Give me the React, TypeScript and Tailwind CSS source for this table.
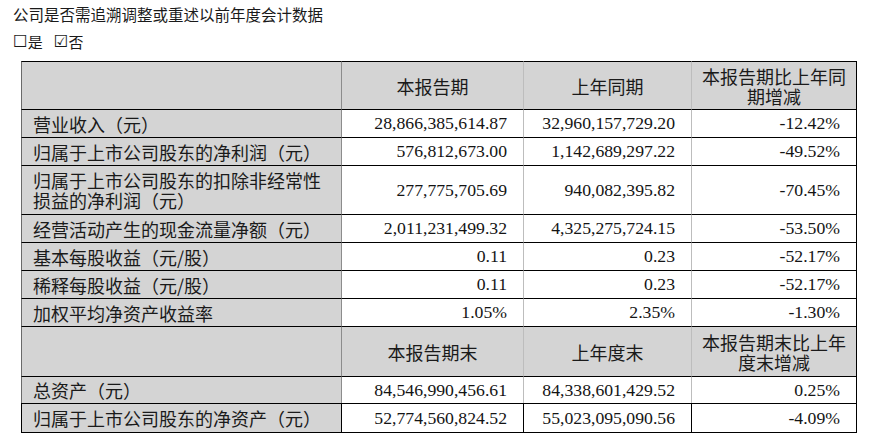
import React from "react";

type Row = {
  label: React.ReactNode;
  a: string;
  b: string;
  c: string;
  h: string;
  last?: boolean;
};

const rows1: Row[] = [
  { label: "营业收入（元）", a: "28,866,385,614.87", b: "32,960,157,729.20", c: "-12.42%", h: "h-[28px]" },
  { label: "归属于上市公司股东的净利润（元）", a: "576,812,673.00", b: "1,142,689,297.22", c: "-49.52%", h: "h-[28px]" },
  {
    label: (
      <>
        归属于上市公司股东的扣除非经常性
        <br />
        损益的净利润（元）
      </>
    ),
    a: "277,775,705.69",
    b: "940,082,395.82",
    c: "-70.45%",
    h: "h-[49px]",
  },
  { label: "经营活动产生的现金流量净额（元）", a: "2,011,231,499.32", b: "4,325,275,724.15", c: "-53.50%", h: "h-[28px]" },
  { label: "基本每股收益（元/股）", a: "0.11", b: "0.23", c: "-52.17%", h: "h-[28px]" },
  { label: "稀释每股收益（元/股）", a: "0.11", b: "0.23", c: "-52.17%", h: "h-[28px]" },
  { label: "加权平均净资产收益率", a: "1.05%", b: "2.35%", c: "-1.30%", h: "h-[28px]" },
];

const rows2: Row[] = [
  { label: "总资产（元）", a: "84,546,990,456.61", b: "84,338,601,429.52", c: "0.25%", h: "h-[27px]" },
  { label: "归属于上市公司股东的净资产（元）", a: "52,774,560,824.52", b: "55,023,095,090.56", c: "-4.09%", h: "h-[29px]", last: true },
];

function DataRow({ r }: { r: Row }) {
  return (
    <div className={`flex ${r.h}`}>
      <div
        className={`w-[320px] box-border border-t border-t-black border-l ${r.last ? "border-l-black" : "border-l-[#6a6a6a]"} bg-[#d4d4d4] flex items-center pl-[11px] text-[18px] leading-[20px] font-['Noto_Sans_CJK_SC',sans-serif] text-[#1a1a1a]`}
      >
        <span>{r.label}</span>
      </div>
      <Num w="w-[182px]" v={r.a} line={r.last ? "border-l-black" : "border-l-[#8c8c8c]"} />
      <Num w="w-[168px]" v={r.b} line={r.last ? "border-l-black" : "border-l-[#bdbdbd]"} />
      <Num w="w-[165px]" v={r.c} line={r.last ? "border-l-black" : "border-l-[#bdbdbd]"} />
    </div>
  );
}

function Num({ w, v, line }: { w: string; v: string; line: string }) {
  return (
    <div
      className={`${w} box-border border-t border-t-black border-l ${line} bg-white flex items-center justify-end pr-[16px] text-[17.7px] text-[#141414] font-['Liberation_Serif',serif]`}
    >
      {v}
    </div>
  );
}

function HeaderRow({ cols, h }: { cols: React.ReactNode[]; h: string }) {
  return (
    <div className={`flex ${h}`}>
      <div className="w-[320px] box-border border-t border-t-black border-l border-l-[#6a6a6a] bg-[#d4d4d4]" />
      {cols.map((c, i) => (
        <div
          key={i}
          className={`${i === 0 ? "w-[182px] border-l-[#8c8c8c]" : i === 1 ? "w-[168px] border-l-[#bdbdbd]" : "w-[165px] border-l-[#bdbdbd]"} box-border border-t border-t-black border-l bg-[#d4d4d4] flex items-center justify-center text-center text-[18px] leading-[20px] font-['Noto_Sans_CJK_SC',sans-serif] text-[#1a1a1a] px-[6px]`}
        >
          <span>{c}</span>
        </div>
      ))}
    </div>
  );
}

export default function App() {
  return (
    <div className="w-[870px] h-[446px] bg-white overflow-hidden text-[#1a1a1a] font-['Noto_Sans_CJK_SC',sans-serif]">
      <div className="pl-[13px] pt-[4px] text-[15.5px] leading-[20px]">
        公司是否需追溯调整或重述以前年度会计数据
      </div>
      <div className="pl-[13px] mt-[8px] text-[15px] leading-[20px] flex items-center">
        <span className="text-[16.5px] leading-[20px] font-['DejaVu_Sans',sans-serif]">☐</span>
        <span>是</span>
        <span className="w-[11px]" />
        <span className="text-[16.5px] leading-[20px] font-['DejaVu_Sans',sans-serif]">☑</span>
        <span>否</span>
      </div>
      <div className="ml-[21px] mt-[9px] w-[836px] box-border border-r border-b border-black">
        <HeaderRow
          h="h-[48px]"
          cols={[
            "本报告期",
            "上年同期",
            <>
              本报告期比上年同
              <br />
              期增减
            </>,
          ]}
        />
        {rows1.map((r, i) => (
          <DataRow key={i} r={r} />
        ))}
        <HeaderRow
          h="h-[50px]"
          cols={[
            "本报告期末",
            "上年度末",
            <>
              本报告期末比上年
              <br />
              度末增减
            </>,
          ]}
        />
        {rows2.map((r, i) => (
          <DataRow key={i} r={r} />
        ))}
      </div>
    </div>
  );
}
